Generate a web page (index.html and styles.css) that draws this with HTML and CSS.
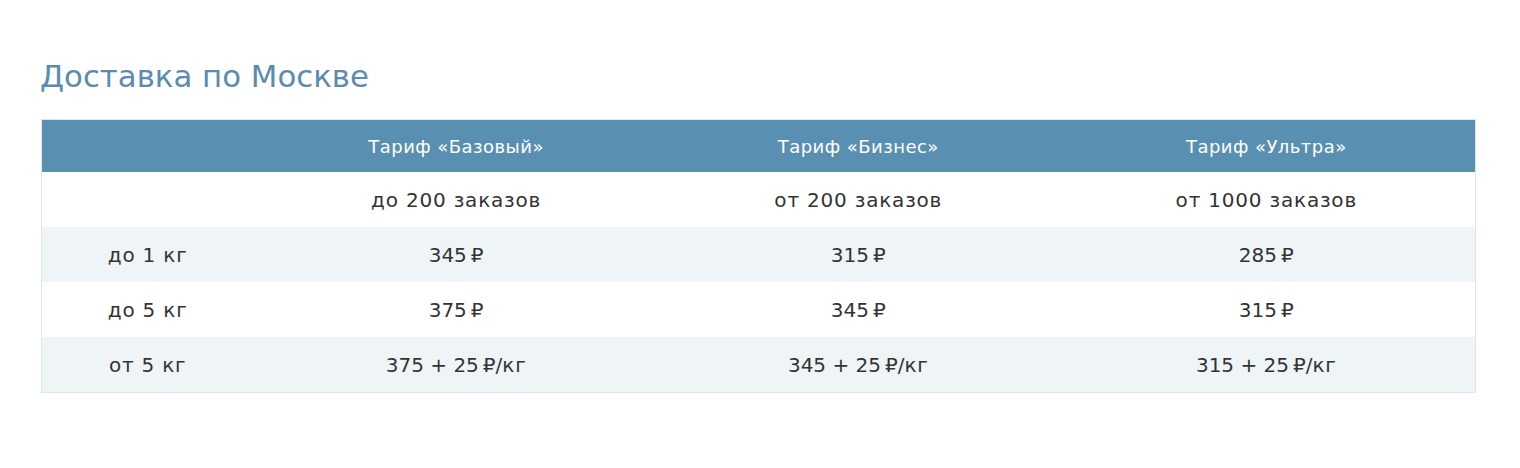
FILE: index.html
```html
<!DOCTYPE html>
<html lang="ru">
<head>
<meta charset="utf-8">
<title>Доставка по Москве</title>
<link rel="stylesheet" href="styles.css">
</head>
<body>
<section class="delivery">
  <h2 class="delivery__title">Доставка по Москве</h2>
  <table class="tariffs">
    <colgroup>
      <col class="tariffs__col-label">
      <col class="tariffs__col-base">
      <col class="tariffs__col-business">
      <col>
    </colgroup>
    <thead>
      <tr>
        <th></th>
        <th>Тариф «Базовый»</th>
        <th>Тариф «Бизнес»</th>
        <th>Тариф «Ультра»</th>
      </tr>
    </thead>
    <tbody>
      <tr>
        <td></td>
        <td>до 200 заказов</td>
        <td>от 200 заказов</td>
        <td>от 1000 заказов</td>
      </tr>
      <tr>
        <td>до 1 кг</td>
        <td>345&#8239;₽</td>
        <td>315&#8239;₽</td>
        <td>285&#8239;₽</td>
      </tr>
      <tr>
        <td>до 5 кг</td>
        <td>375&#8239;₽</td>
        <td>345&#8239;₽</td>
        <td>315&#8239;₽</td>
      </tr>
      <tr>
        <td>от 5 кг</td>
        <td>375 + 25&#8239;₽/кг</td>
        <td>345 + 25&#8239;₽/кг</td>
        <td>315 + 25&#8239;₽/кг</td>
      </tr>
    </tbody>
  </table>
</section>
</body>
</html>
```
FILE: styles.css
```css
html, body {
  margin: 0;
  padding: 0;
  background: #ffffff;
}
body {
  font-family: "DejaVu Sans", Verdana, sans-serif;
  color: #333333;
}
.delivery {
  padding: 55px 44px 0 41px;
}
.delivery__title {
  margin: 0 0 22px -1px;
  font-weight: normal;
  font-size: 30.8px;
  line-height: 42px;
  color: #5b8cae;
}
.tariffs {
  width: 100%;
  border-collapse: collapse;
  table-layout: fixed;
  border: 1px solid #dfe6ea;
}
.tariffs__col-label {
  width: 14.77%;
}
.tariffs__col-base {
  width: 28.29%;
}
.tariffs__col-business {
  width: 27.8%;
}
.tariffs th {
  background: #5990b1;
  color: #ffffff;
  font-family: "DejaVu Sans", Tahoma, sans-serif;
  font-weight: normal;
  font-size: 18px;
  letter-spacing: 0.45px;
  height: 52px;
  padding: 0;
  text-align: center;
}
.tariffs td {
  font-size: 20px;
  letter-spacing: 0.8px;
  height: 55px;
  padding: 0;
  text-align: center;
}
.tariffs tbody tr:nth-child(even) td {
  background: #eff4f7;
}
```
